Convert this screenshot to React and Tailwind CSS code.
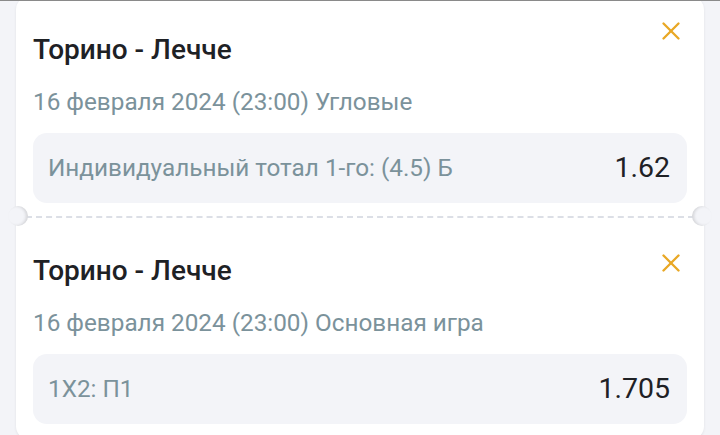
import { X } from 'lucide-react';

const bets = [
  { id: 1, match: 'Торино - Лечче', date: '16 февраля 2024 (23:00) Угловые', market: 'Индивидуальный тотал 1-го: (4.5) Б', odds: '1.62', first: true },
  { id: 2, match: 'Торино - Лечче', date: '16 февраля 2024 (23:00) Основная игра', market: '1X2: П1', odds: '1.705' },
];

function BetItem({ bet }) {
  return (
    <div className={`relative px-[17px] ${bet.first ? 'pt-[38px] pb-[13px]' : 'pt-[39px] pb-[16px]'}`}>
      <button
        className={`absolute right-[18px] text-[#e9a825] ${bet.first ? 'top-[20px]' : 'top-[32px]'}`}
      >
        <X size={30} strokeWidth={1.9} />
      </button>
      <div className="text-[28px] leading-[32px] font-medium text-[#1e2125]">{bet.match}</div>
      <div className="mt-[22px] text-[24.3px] leading-[28px] text-[#7b929b]">{bet.date}</div>
      <div className="mt-[17px] h-[70px] rounded-[14px] bg-[#f3f4f8] pl-[15px] pr-[17px] flex items-center justify-between">
        <span className="text-[24.3px] text-[#7b929b]">{bet.market}</span>
        <span className="text-[28.5px] text-[#1e2125]">{bet.odds}</span>
      </div>
    </div>
  );
}

function Divider() {
  return (
    <div className="relative h-0">
      <div className="mx-[10px] border-t-2 border-dashed border-[#dcdfe6]" />
      <div className="absolute left-[-8px] top-[-10px] w-[20px] h-[20px] rounded-full bg-[#f3f4f8] shadow-[inset_-2px_0_3px_rgba(0,0,0,0.12)]" />
      <div className="absolute right-[-8px] top-[-10px] w-[20px] h-[20px] rounded-full bg-[#f3f4f8] shadow-[inset_2px_0_3px_rgba(0,0,0,0.12)]" />
    </div>
  );
}

export default function App() {
  return (
    <div className="w-[720px] h-[435px] overflow-hidden bg-[#f3f4f8] font-['Roboto',sans-serif]">
      <div className="h-px bg-[#8a8a8a] relative z-10" />
      <div className="px-4 mt-[-5px]">
        <div className="bg-white rounded-[14px] shadow-[0_1px_3px_rgba(0,0,0,0.08)]">
          <BetItem bet={bets[0]} />
          <Divider />
          <BetItem bet={bets[1]} />
        </div>
      </div>
    </div>
  );
}
